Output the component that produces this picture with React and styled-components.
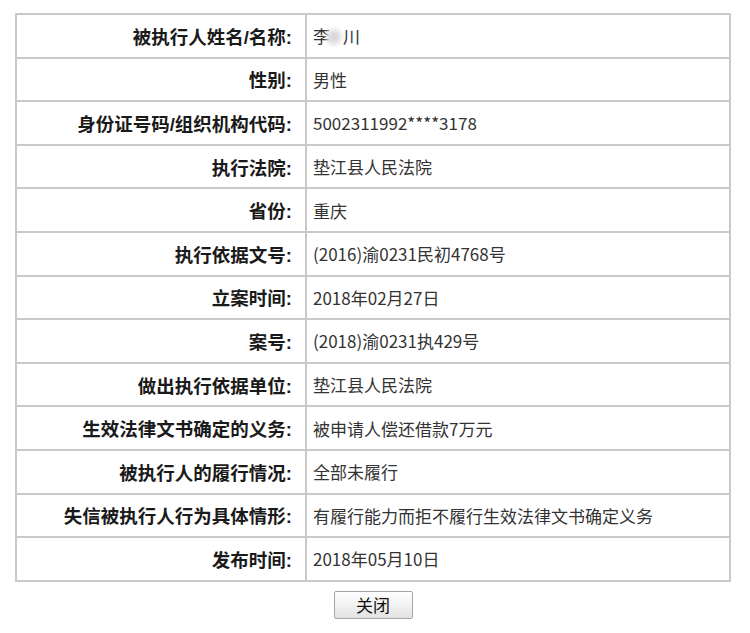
import React from 'react';
import styled, { createGlobalStyle } from 'styled-components';

const GlobalStyle = createGlobalStyle`
  html, body {
    margin: 0;
    padding: 0;
    background: #ffffff;
  }
  body {
    font-family: "Liberation Sans", "Noto Sans CJK SC", sans-serif;
  }
`;

const rows = [
  { label: '被执行人姓名/名称:', value: 'name' },
  { label: '性别:', value: '男性' },
  { label: '身份证号码/组织机构代码:', value: '5002311992****3178' },
  { label: '执行法院:', value: '垫江县人民法院' },
  { label: '省份:', value: '重庆' },
  { label: '执行依据文号:', value: '(2016)渝0231民初4768号' },
  { label: '立案时间:', value: '2018年02月27日' },
  { label: '案号:', value: '(2018)渝0231执429号' },
  { label: '做出执行依据单位:', value: '垫江县人民法院' },
  { label: '生效法律文书确定的义务:', value: '被申请人偿还借款7万元' },
  { label: '被执行人的履行情况:', value: '全部未履行' },
  { label: '失信被执行人行为具体情形:', value: '有履行能力而拒不履行生效法律文书确定义务' },
  { label: '发布时间:', value: '2018年05月10日' },
];

const Page = styled.div`
  padding: 13px 19px 0 15px;
  display: flex;
  flex-direction: column;
  align-items: center;
`;

const DetailTable = styled.table`
  width: 716px;
  border-collapse: collapse;
  border: 2px solid #c6c6c6;
`;

const Row = styled.tr`
  height: 43.6px;
`;

const LabelCell = styled.td`
  width: 275px;
  padding: 0 13px 0 0;
  border: 2px solid #c9c9c9;
  text-align: right;
  font-family: "Liberation Sans", "Noto Sans CJK SC", sans-serif;
  font-weight: 700;
  font-size: 18.5px;
  color: #1a1a1a;
  white-space: nowrap;
`;

const ValueCell = styled.td`
  padding: 0 0 0 6px;
  border: 2px solid #c9c9c9;
  text-align: left;
  font-family: "Noto Sans CJK SC", sans-serif;
  font-size: 17px;
  color: #333333;
  white-space: nowrap;
`;

const Blurred = styled.span`
  display: inline-block;
  width: 16px;
  height: 18px;
  margin: 0 1px 0 -4px;
  vertical-align: -3px;
  border-radius: 50%;
  background: radial-gradient(circle, #cfcfcf 0%, #e4e4e4 55%, #ffffff 100%);
  filter: blur(2px);
`;

const CloseButton = styled.button`
  margin-top: 9px;
  width: 79px;
  height: 28px;
  border: 1px solid #a5a5a5;
  border-radius: 2px;
  background: linear-gradient(to bottom, #ffffff 0%, #f2f2f2 50%, #e2e2e2 100%);
  font-family: "Noto Sans CJK SC", sans-serif;
  font-size: 17px;
  color: #111111;
  line-height: 1;
  padding: 0;
  cursor: pointer;
`;

function NameValue() {
  return (
    <>
      李<Blurred />川
    </>
  );
}

export default function App() {
  return (
    <>
      <GlobalStyle />
      <Page>
        <DetailTable>
          <tbody>
            {rows.map(row => (
              <Row key={row.label}>
                <LabelCell>{row.label}</LabelCell>
                <ValueCell>{row.value === 'name' ? <NameValue /> : row.value}</ValueCell>
              </Row>
            ))}
          </tbody>
        </DetailTable>
        <CloseButton type="button">关闭</CloseButton>
      </Page>
    </>
  );
}
